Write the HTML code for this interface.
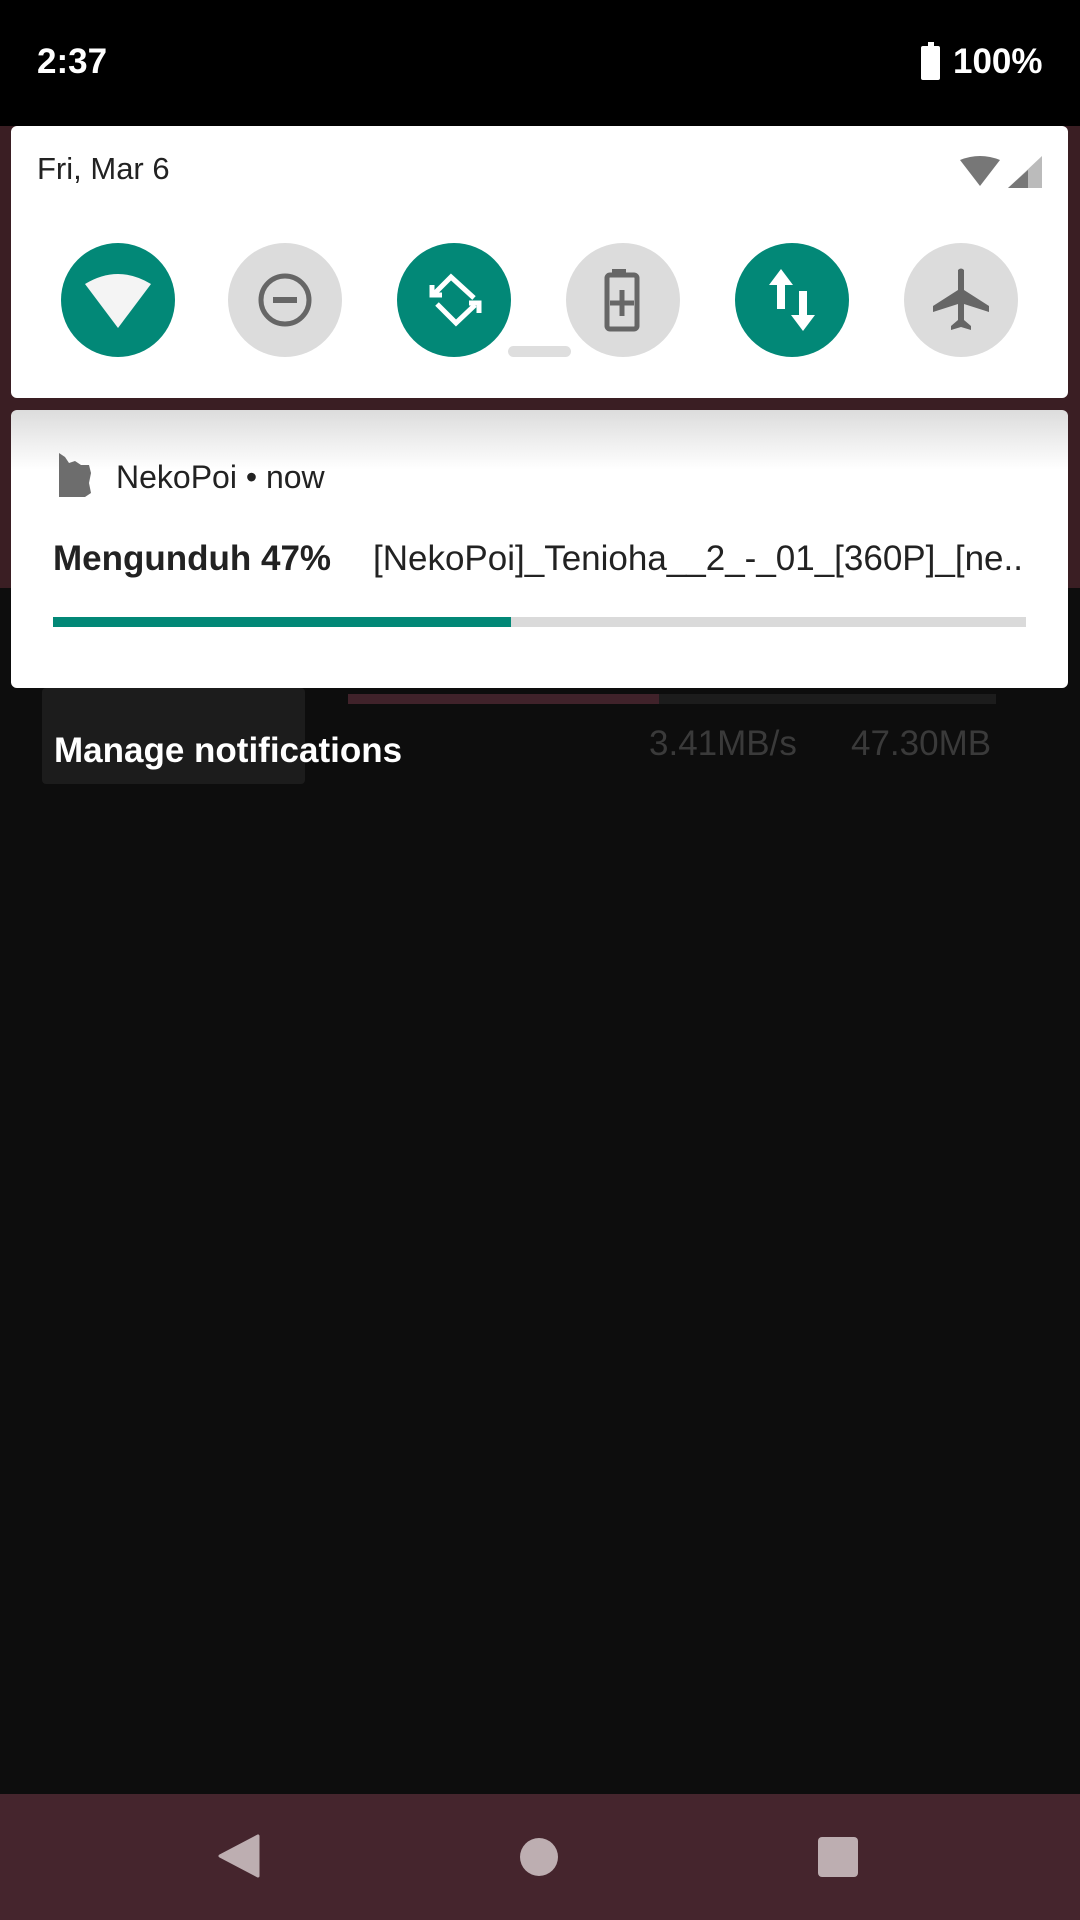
<!DOCTYPE html>
<html><head><meta charset="utf-8"><style>
*{margin:0;padding:0;box-sizing:border-box}
body{width:1080px;height:1920px;background:#0d0d0d;position:relative;overflow:hidden;font-family:"Liberation Sans",sans-serif}
.a{position:absolute;white-space:nowrap}
.t{border-radius:50%;width:114px;height:114px;top:243px;display:flex;align-items:center;justify-content:center}
.on{background:#028877}.off{background:#dcdcdc}
</style></head><body>
<div class="a" style="left:0;top:0;width:1080px;height:126px;background:#000"></div>
<div class="a" style="left:0;top:126px;width:1080px;height:462px;background:#3a1e23"></div>
<div class="a" style="left:37px;top:42px;color:#fff;font-size:35px;font-weight:bold">2:37</div>
<div class="a" style="left:921px;top:46px;width:19px;height:34px;background:#fff;border-radius:2px"></div>
<div class="a" style="left:928px;top:42px;width:6px;height:5px;background:#fff"></div>
<div class="a" style="left:953px;top:42px;color:#fff;font-size:35px;font-weight:bold">100%</div>

<div class="a" style="left:11px;top:126px;width:1057px;height:272px;background:#fff;border-radius:6px"></div>
<div class="a" style="left:37px;top:151px;color:#222;font-size:31px">Fri, Mar 6</div>
<svg class="a" style="left:960px;top:156px" width="82" height="34"><path d="M0 4 Q20 -4 40 4 L20 30Z" fill="#777"/><path d="M48 32 L82 0 V32Z" fill="#bbb"/><path d="M48 32 L68 14 V32Z" fill="#777"/></svg>

<div class="a t on" style="left:61px"><svg width="70" height="60"><path d="M2 14 Q35 -6 68 14 L35 58Z" fill="#f4f4f4"/></svg></div>
<div class="a t off" style="left:228px"><svg width="56" height="56"><circle cx="28" cy="28" r="24" fill="none" stroke="#666" stroke-width="5"/><rect x="16" y="25" width="24" height="6" fill="#666"/></svg></div>
<div class="a t on" style="left:397px"><svg width="114" height="114" fill="none" stroke="#fff" stroke-width="5"><path d="M38 50 L54 34 L77 55"/><path d="M35 42 V52 H45"/><path d="M40 61 L59 80 L78 62"/><path d="M72 60 H82 V70"/></svg></div>
<div class="a t off" style="left:566px"><svg width="40" height="64"><rect x="9" y="1" width="14" height="6" fill="#666"/><rect x="4" y="7" width="30" height="54" rx="3" fill="none" stroke="#666" stroke-width="5"/><path d="M19 22 v26 M7 35 h24" stroke="#666" stroke-width="5"/></svg></div>
<div class="a t on" style="left:735px"><svg width="50" height="62" fill="#fff"><path d="M14 0 L26 16 H18 V40 H10 V16 H2Z"/><path d="M36 62 L48 46 H40 V22 H32 V46 H24Z"/></svg></div>
<div class="a t off" style="left:904px"><svg width="60" height="64" fill="#666"><path d="M27 2 Q30 -1 33 2 V22 L58 38 V44 L33 36 V52 L40 58 V62 L30 59 L20 62 V58 L27 52 V36 L2 44 V38 L27 22Z"/></svg></div>
<div class="a" style="left:508px;top:346px;width:63px;height:11px;background:#dedede;border-radius:6px"></div>

<div class="a" style="left:42px;top:688px;width:263px;height:96px;background:#1c1c1c;border-radius:4px"></div>
<div class="a" style="left:348px;top:694px;width:311px;height:10px;background:#40222a"></div>
<div class="a" style="left:659px;top:694px;width:337px;height:10px;background:#1c1c1c"></div>
<div class="a" style="left:649px;top:724px;color:#3a3a3a;font-size:35px">3.41MB/s</div>
<div class="a" style="left:851px;top:724px;color:#3a3a3a;font-size:35px">47.30MB</div>

<div class="a" style="left:11px;top:410px;width:1057px;height:278px;background:linear-gradient(#dcdcdc,#fff 60px);border-radius:6px"></div>
<svg class="a" style="left:59px;top:453px" width="34" height="44"><path d="M0 0 L6 4 L10 10 L16 8 L22 12 L30 12 L32 20 L30 30 L32 40 L26 44 L0 44Z" fill="#6d6d6d"/></svg>
<div class="a" style="left:116px;top:459px;color:#222;font-size:32px">NekoPoi • now</div>
<div class="a" style="left:53px;top:539px;color:#222;font-size:35px;font-weight:bold">Mengunduh 47%</div>
<div class="a" style="left:373px;top:539px;color:#222;font-size:35px">[NekoPoi]_Tenioha__2_-_01_[360P]_[ne..</div>
<div class="a" style="left:53px;top:617px;width:973px;height:10px;background:#dadada"></div>
<div class="a" style="left:53px;top:617px;width:458px;height:10px;background:#028877"></div>

<div class="a" style="left:54px;top:731px;color:#fff;font-size:35px;font-weight:bold">Manage notifications</div>

<div class="a" style="left:0;top:1794px;width:1080px;height:126px;background:#45252d"></div>
<svg class="a" style="left:218px;top:1834px" width="42" height="44"><path d="M40 2 V42 L2 22Z" fill="#bdaeb1" stroke="#bdaeb1" stroke-width="3" stroke-linejoin="round"/></svg>
<div class="a" style="left:520px;top:1838px;width:38px;height:38px;border-radius:50%;background:#bdaeb1"></div>
<div class="a" style="left:818px;top:1837px;width:40px;height:40px;border-radius:4px;background:#bdaeb1"></div>
</body></html>
